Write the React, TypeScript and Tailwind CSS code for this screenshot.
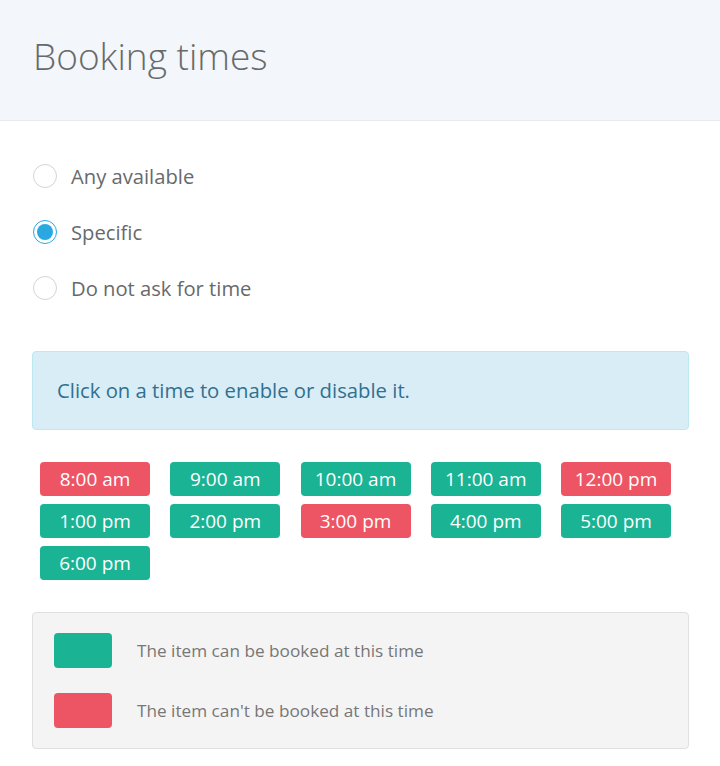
import React, { useState } from "react";

const times = [
  { label: "8:00 am", on: false },
  { label: "9:00 am", on: true },
  { label: "10:00 am", on: true },
  { label: "11:00 am", on: true },
  { label: "12:00 pm", on: false },
  { label: "1:00 pm", on: true },
  { label: "2:00 pm", on: true },
  { label: "3:00 pm", on: false },
  { label: "4:00 pm", on: true },
  { label: "5:00 pm", on: true },
  { label: "6:00 pm", on: true },
];

const options = ["Any available", "Specific", "Do not ask for time"];

export default function App() {
  const [mode, setMode] = useState("Specific");
  const [slots, setSlots] = useState(times);

  const toggle = (i: number) =>
    setSlots((s) => s.map((t, j) => (j === i ? { ...t, on: !t.on } : t)));

  return (
    <div className="w-[720px] min-h-[766px] bg-white text-[#676a6c] font-['Open_Sans',sans-serif]">
      <div className="h-[121px] bg-[#f3f6fa] border-b border-[#e7eaec] px-[33px] flex items-center">
        <h1 className="text-[37px] font-light text-[#676a6c] leading-none -mt-[10px]">Booking times</h1>
      </div>

      <div className="pl-[32px] pr-[31px] pt-[27px] pb-[18px]">
        <div className="flex flex-col">
          {options.map((o) => (
            <label key={o} className="h-[56px] flex items-center gap-[14px] cursor-pointer" onClick={() => setMode(o)}>
              <span
                className={
                  "w-[24px] h-[24px] rounded-full border flex items-center justify-center ml-[1px] " +
                  (mode === o ? "border-[#2aa9e0]" : "border-[#d4d4d4]")
                }
              >
                {mode === o && <span className="w-[16px] h-[16px] rounded-full bg-[#2aa9e0]" />}
              </span>
              <span className="text-[20.2px]">{o}</span>
            </label>
          ))}
        </div>

        <div className="mt-[35px] h-[79px] rounded-[4px] border border-[#bce8f1] bg-[#d9edf7] text-[#31708f] text-[20.3px] flex items-center px-[24px]">
          Click on a time to enable or disable it.
        </div>

        <div className="mt-[32px] ml-[8px] flex flex-wrap gap-x-[20.25px] gap-y-[8px]">
          {slots.map((t, i) => (
            <button
              key={t.label}
              onClick={() => toggle(i)}
              className={
                "w-[110px] h-[34px] rounded-[4px] text-white text-[19px] leading-none flex items-center justify-center " +
                (t.on ? "bg-[#1ab394]" : "bg-[#ed5565]")
              }
            >
              {t.label}
            </button>
          ))}
        </div>

        <div className="mt-[32px] h-[137px] rounded-[4px] border border-[#e0e0e0] bg-[#f4f4f4] px-[21px] pt-[20px] flex flex-col gap-[25px]">
          <div className="flex items-center gap-[25px]">
            <span className="w-[58px] h-[35px] rounded-[4px] bg-[#1ab394]" />
            <span className="text-[17.2px] text-[#777777]">The item can be booked at this time</span>
          </div>
          <div className="flex items-center gap-[25px]">
            <span className="w-[58px] h-[35px] rounded-[4px] bg-[#ed5565]" />
            <span className="text-[17.2px] text-[#777777]">The item can't be booked at this time</span>
          </div>
        </div>
      </div>
    </div>
  );
}
